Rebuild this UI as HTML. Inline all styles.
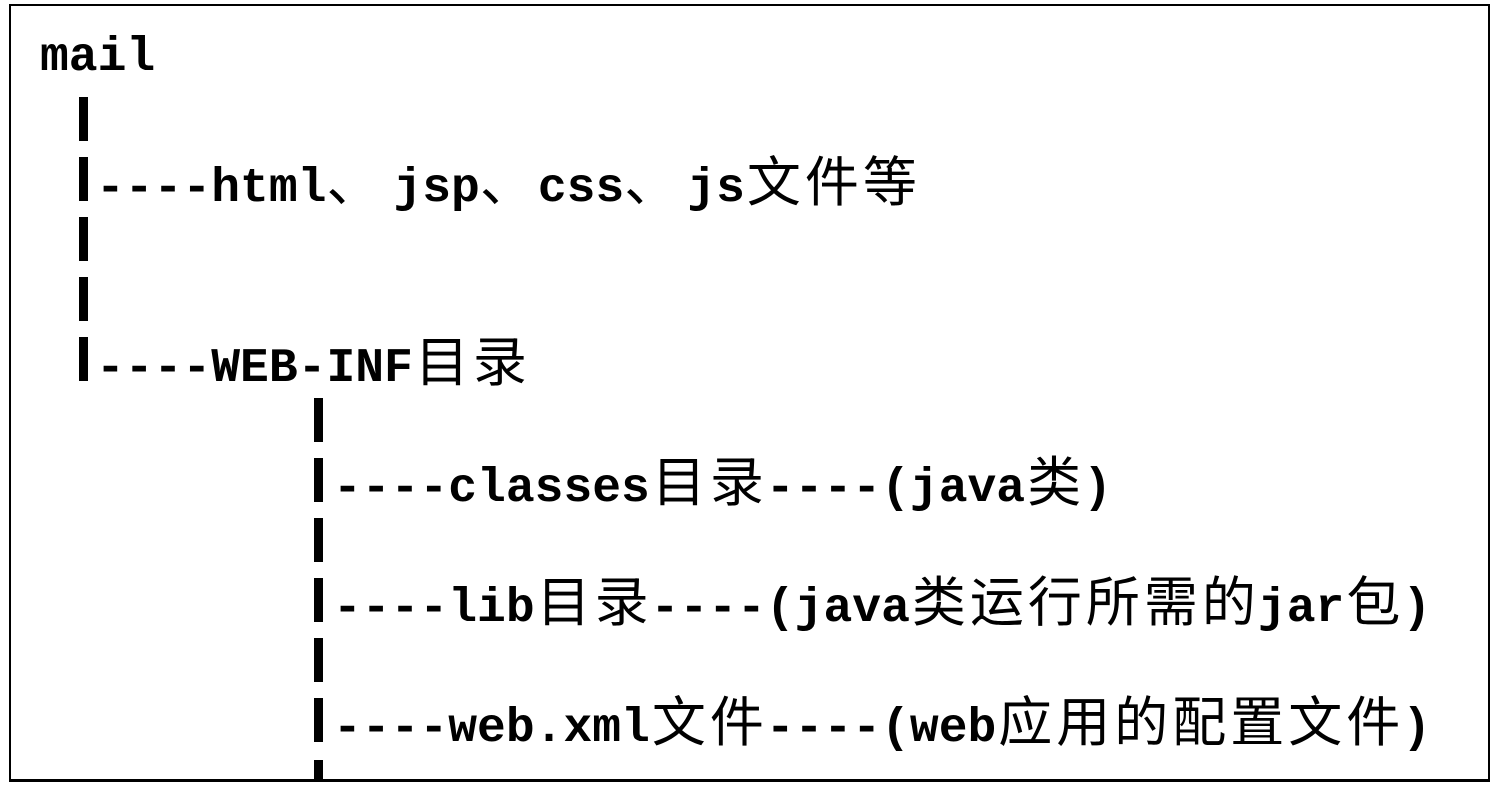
<!DOCTYPE html>
<html><head><meta charset="utf-8"><style>
html,body{margin:0;padding:0;background:#fff;}
body{width:1496px;height:786px;position:relative;overflow:hidden;}
.box{position:absolute;left:9px;top:4px;width:1477px;height:773px;border:2px solid #000;border-bottom-width:3px;}
.t{position:absolute;white-space:pre;font-family:"Liberation Mono","Noto Sans CJK SC",monospace;font-weight:bold;font-size:48px;line-height:60px;color:#000;letter-spacing:0;}
.c{font-family:"Noto Sans CJK SC","WenQuanYi Zen Hei",sans-serif;font-weight:normal;font-size:54px;display:inline-block;width:58px;text-align:center;}
.d{text-align:left;}
.b{position:absolute;width:9px;height:44px;background:#000;}
</style></head><body>
<div class="box"></div>
<div class="t" style="left:40px;top:28px">mail</div>
<div class="b" style="left:79px;top:97px"></div>
<div class="b" style="left:79px;top:157px"></div>
<div class="b" style="left:79px;top:217px"></div>
<div class="b" style="left:79px;top:277px"></div>
<div class="b" style="left:79px;top:337px"></div>
<div class="t" style="left:96px;top:148px">----html<span class="c d" style="width:67px">、</span>jsp<span class="c d" style="width:58px">、</span>css<span class="c d" style="width:63px">、</span>js<span class="c">文</span><span class="c">件</span><span class="c">等</span></div>
<div class="t" style="left:96px;top:328px">----WEB-INF<span class="c">目</span><span class="c">录</span></div>
<div class="b" style="left:314px;top:398px"></div>
<div class="b" style="left:314px;top:458px"></div>
<div class="b" style="left:314px;top:518px"></div>
<div class="b" style="left:314px;top:578px"></div>
<div class="b" style="left:314px;top:638px"></div>
<div class="b" style="left:314px;top:698px"></div>
<div class="b" style="left:314px;top:760px;height:19px"></div>
<div class="t" style="left:333px;top:448px">----classes<span class="c">目</span><span class="c">录</span>----(java<span class="c">类</span>)</div>
<div class="t" style="left:333px;top:568px">----lib<span class="c">目</span><span class="c">录</span>----(java<span class="c">类</span><span class="c">运</span><span class="c">行</span><span class="c">所</span><span class="c">需</span><span class="c">的</span>jar<span class="c">包</span>)</div>
<div class="t" style="left:333px;top:688px">----web.xml<span class="c">文</span><span class="c">件</span>----(web<span class="c">应</span><span class="c">用</span><span class="c">的</span><span class="c">配</span><span class="c">置</span><span class="c">文</span><span class="c">件</span>)</div>
</body></html>
